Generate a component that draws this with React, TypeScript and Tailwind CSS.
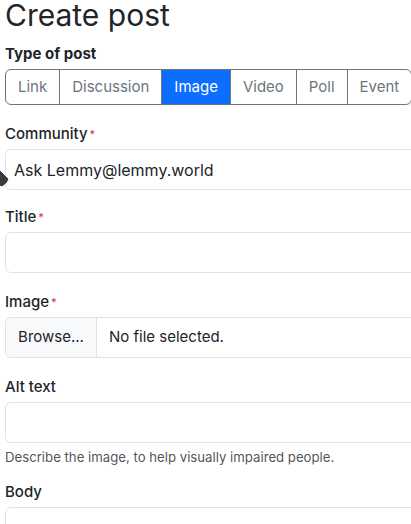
import type { ReactNode } from 'react';

const tabs = ['Link', 'Discussion', 'Image', 'Video', 'Poll', 'Event'];

function Label({ children, required }: { children: ReactNode; required?: boolean }) {
  return (
    <div className="h-[25px] pt-[1px] leading-6 mb-[3px] text-[15px] font-medium text-[#212529]">
      {children}
      {required && <span className="ml-[2px] text-[11px] align-top text-[#dc3545]">*</span>}
    </div>
  );
}

function TextBox({ value }: { value?: string }) {
  return (
    <div className="h-[41px] w-[460px] rounded-[6px] border border-[#dee2e6] bg-white px-2 flex items-center text-[16px] text-[#212529]">
      {value}
    </div>
  );
}

export default function App() {
  return (
    <div className="relative w-[411px] h-[524px] overflow-hidden bg-white font-['Inter','Liberation_Sans',sans-serif] text-[#212529]">
      <div className="pl-[5px]">
        <h1 className="-mt-[3px] text-[30px] leading-[36px] font-normal">Create post</h1>
        <div className="mt-[9px] h-6 leading-6 text-[15px] font-bold">Type of post</div>
        <div className="mt-[3px] inline-flex h-9 rounded-[6px] border border-[#6c757d] overflow-hidden">
          {tabs.map((t, i) => (
            <div
              key={t}
              className={
                'px-3 flex items-center text-[15px] ' +
                (i > 0 ? 'border-l border-[#6c757d] ' : '') +
                (t === 'Image' ? 'bg-[#0d6efd] text-white' : 'text-[#6c757d]')
              }
            >
              {t}
            </div>
          ))}
        </div>

        <div className="mt-[16px]">
          <Label required>Community</Label>
          <TextBox value="Ask Lemmy@lemmy.world" />
        </div>

        <div className="mt-[14px]">
          <Label required>Title</Label>
          <TextBox />
        </div>

        <div className="mt-[16px]">
          <Label required>Image</Label>
          <div className="h-[41px] w-[460px] rounded-[6px] border border-[#dee2e6] flex text-[15px]">
            <div className="w-[91px] flex items-center justify-center bg-[#f8f9fa] border-r border-[#dee2e6] rounded-l-[6px]">
              Browse...
            </div>
            <div className="flex items-center pl-3">No file selected.</div>
          </div>
        </div>

        <div className="mt-[16px]">
          <Label>Alt text</Label>
          <TextBox />
          <div className="mt-[4px] text-[13.2px] leading-5 text-[#212529]/80">
            Describe the image, to help visually impaired people.
          </div>
        </div>

        <div className="mt-[12px]">
          <Label>Body</Label>
          <TextBox />
        </div>
      </div>

      <svg className="absolute left-0 top-[166px]" width="12" height="24" viewBox="0 0 12 24">
        <polygon points="-2,2 9,13 7,17 2,21 -2,19" fill="#3a3a3a" stroke="#ffffff" strokeWidth="1" />
      </svg>
    </div>
  );
}
